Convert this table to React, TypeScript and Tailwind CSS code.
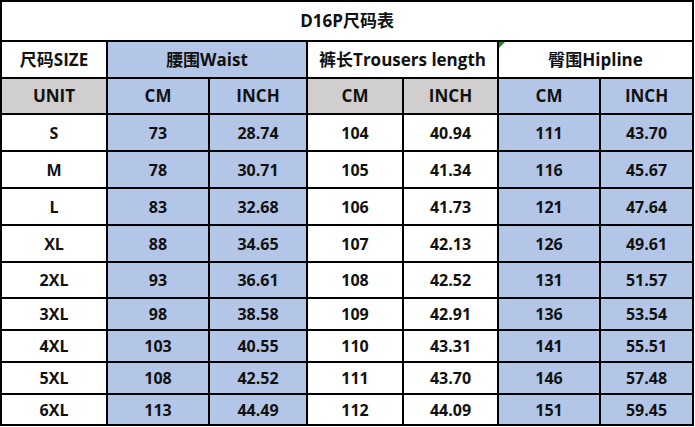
import React from 'react';

const rows: [string, string, string, string, string, string, string][] = [
  ['S', '73', '28.74', '104', '40.94', '111', '43.70'],
  ['M', '78', '30.71', '105', '41.34', '116', '45.67'],
  ['L', '83', '32.68', '106', '41.73', '121', '47.64'],
  ['XL', '88', '34.65', '107', '42.13', '126', '49.61'],
  ['2XL', '93', '36.61', '108', '42.52', '131', '51.57'],
  ['3XL', '98', '38.58', '109', '42.91', '136', '53.54'],
  ['4XL', '103', '40.55', '110', '43.31', '141', '55.51'],
  ['5XL', '108', '42.52', '111', '43.70', '146', '57.48'],
  ['6XL', '113', '44.49', '112', '44.09', '151', '59.45'],
];

// blue on waist + hip columns, white elsewhere
const colBg = ['bg-white', 'bg-[#b4c6e7]', 'bg-[#b4c6e7]', 'bg-white', 'bg-white', 'bg-[#b4c6e7]', 'bg-[#b4c6e7]'];
const unitBg = ['bg-[#d0cece]', 'bg-[#b4c6e7]', 'bg-[#b4c6e7]', 'bg-[#d0cece]', 'bg-[#d0cece]', 'bg-[#b4c6e7]', 'bg-[#b4c6e7]'];
const widths = [105, 102, 98, 96, 95, 102, 92];
const rowH = ['h-[37px]', 'h-[37px]', 'h-[37px]', 'h-[37px]', 'h-[36px]', 'h-[32px]', 'h-[32px]', 'h-[32px]', 'h-[30px]'];

const cell = 'border-2 border-black text-center align-middle p-0 leading-[20px]';

export default function App() {
  return (
    <div className="w-[695px] h-[427px] bg-white">
      <div className="w-[694px] h-[426px] overflow-hidden border-2 border-black font-['Open_Sans','Noto_Sans_CJK_SC',sans-serif] font-bold text-[16px] text-[#111]">
        <table className="w-[690px] border-collapse border-hidden table-fixed">
          <colgroup>
            {widths.map((w, i) => (
              <col key={i} style={{ width: w }} />
            ))}
          </colgroup>
          <tbody>
            <tr className="h-[39px]">
              <td colSpan={7} className={`${cell} bg-white text-[17px]`}>D16P尺码表</td>
            </tr>
            <tr className="h-[37px] text-[17px]">
              <td className={`${cell} bg-white`}>尺码SIZE</td>
              <td colSpan={2} className={`${cell} bg-[#b4c6e7]`}>腰围Waist</td>
              <td colSpan={2} className={`${cell} bg-white`}>裤长Trousers length</td>
              <td colSpan={2} className={`${cell} bg-white relative`}>
                <span className="absolute left-0 top-0 w-0 h-0 border-t-[6px] border-t-[#1e8a1e] border-r-[6px] border-r-transparent" />
                臀围Hipline
              </td>
            </tr>
            <tr className="h-[36px]">
              {['UNIT', 'CM', 'INCH', 'CM', 'INCH', 'CM', 'INCH'].map((t, i) => (
                <td key={i} className={`${cell} ${unitBg[i]} text-[17px]`}>{t}</td>
              ))}
            </tr>
            {rows.map((r, ri) => (
              <tr key={r[0]} className={rowH[ri]}>
                {r.map((v, i) => (
                  <td key={i} className={`${cell} ${colBg[i]}`}>{v}</td>
                ))}
              </tr>
            ))}
          </tbody>
        </table>
      </div>
    </div>
  );
}
